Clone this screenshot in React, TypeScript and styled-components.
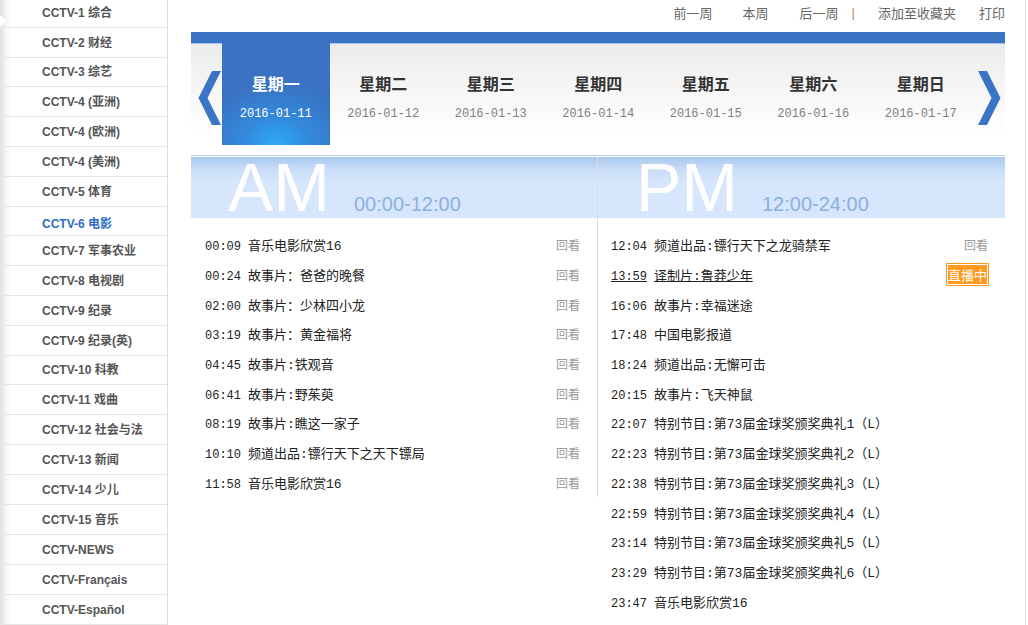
import React from 'react'
import styled, { createGlobalStyle } from 'styled-components'

const GlobalStyle = createGlobalStyle`
  html, body {
    margin: 0;
    padding: 0;
    height: 625px;
    overflow: hidden;
    background: #fff;
  }
  body {
    font-family: "Liberation Sans", "Noto Sans CJK SC", sans-serif;
    color: #333;
  }
`

const Page = styled.div`
  display: flex;
  align-items: flex-start;
  width: 1025px;
  height: 625px;
  border-right: 1px solid #e2e2e2;
`

const Sidebar = styled.ul`
  position: relative;
  list-style: none;
  margin: -2px 0 0 0;
  padding: 0;
  width: 167px;
  height: 627px;
  border-right: 1px solid #dcdcdc;
  background: linear-gradient(to right, #dedede 0, #f6f6f6 6px, #fff 12px);
  flex-shrink: 0;

  &::before {
    content: '';
    position: absolute;
    left: 0;
    top: 17px;
    border-left: 6px solid #fff;
    border-top: 6px solid transparent;
    border-bottom: 6px solid transparent;
  }
`

// some rows of the original list are one pixel shorter
const ChannelItem = styled.li<{ $active?: boolean; $tight?: boolean }>`
  height: ${({ $tight, $active }) => ($active ? 21 : $tight ? 27 : 28)}px;
  line-height: ${({ $tight, $active }) => ($active ? 21 : $tight ? 27 : 28)}px;
  padding-top: ${({ $active }) => ($active ? '7px' : '1px')};
  border-bottom: 1px solid #e6e6e6;
  padding-left: 42px;
  font-size: 12px;
  font-weight: bold;
  color: ${({ $active }) => ($active ? '#2d6dc4' : '#555')};
  white-space: nowrap;
`

const Main = styled.div`
  margin-left: 23px;
  width: 814px;
  flex-shrink: 0;
`

const TopLinks = styled.div`
  display: flex;
  justify-content: flex-end;
  align-items: center;
  height: 24px;
  margin-bottom: 8px;
  font-family: "Noto Sans CJK SC", sans-serif;
  font-size: 13px;
  color: #666;
`

const TopLink = styled.span<{ $gap: number }>`
  margin-left: ${({ $gap }) => $gap}px;
  cursor: pointer;
`

const Pipe = styled.span`
  margin-left: 13px;
  color: #b98a5c;
  font-family: "Liberation Sans", sans-serif;
`

const WeekBar = styled.div`
  border-top: 11px solid #3a73c3;
  border-bottom: 1px solid #b9cfee;
  margin-bottom: 1px;
`

const WeekBody = styled.div`
  display: flex;
  align-items: flex-start;
  height: 112px;
  background: linear-gradient(to bottom, #ebebeb 0%, #f6f6f6 40%, #fff 85%);
  box-shadow: inset 0 1px 0 #a9c2e6;
`

const ArrowBox = styled.div<{ $side: 'left' | 'right' }>`
  display: flex;
  align-items: center;
  justify-content: ${({ $side }) => ($side === 'left' ? 'flex-end' : 'flex-start')};
  padding-left: ${({ $side }) => ($side === 'left' ? '0' : '2px')};
  height: 110px;
  width: ${({ $side }) => ($side === 'left' ? 31 : 28.5)}px;
  flex-shrink: 0;
`

const DayTab = styled.div<{ $active?: boolean }>`
  width: 107.5px;
  height: 102px;
  flex-shrink: 0;
  display: flex;
  flex-direction: column;
  align-items: center;
  padding-top: 29px;
  box-sizing: border-box;
  background: ${({ $active }) =>
    $active
      ? 'radial-gradient(ellipse 70% 60% at 50% 100%, #2eaaf7 0%, #3389dc 45%, #3a73c3 100%)'
      : 'transparent'};
`

const DayName = styled.div<{ $active?: boolean }>`
  font-family: "Noto Sans CJK SC", sans-serif;
  font-size: 16px;
  font-weight: bold;
  line-height: 22px;
  color: ${({ $active }) => ($active ? '#fff' : '#333')};
`

const DayDate = styled.div<{ $active?: boolean }>`
  margin-top: 12px;
  font-family: "Liberation Mono", monospace;
  font-size: 12px;
  line-height: 16px;
  color: ${({ $active }) => ($active ? '#fff' : '#808080')};
`

const Schedule = styled.div`
  display: grid;
  grid-template-columns: 407px 407px;
  align-items: start;
`

const Column = styled.div<{ $divider?: boolean }>`
  border-right: ${({ $divider }) => ($divider ? '1px solid #dcdcdc' : 'none')};
`

const PeriodHeader = styled.div<{ $indent: number }>`
  display: flex;
  align-items: baseline;
  height: 61px;
  padding-left: ${({ $indent }) => $indent}px;
  background: linear-gradient(to bottom, #a8c8ef 0%, #c6dbf7 18%, #d6e6fc 40%, #d6e6fc 100%);
`

const PeriodLabel = styled.span`
  font-family: "Liberation Sans", sans-serif;
  font-size: 68px;
  line-height: 61px;
  color: #fff;
`

const PeriodRange = styled.span`
  margin-left: 24px;
  font-family: "Liberation Sans", sans-serif;
  font-size: 20px;
  line-height: 20px;
  color: #8db0de;
`

const ProgramList = styled.ul<{ $indent: number }>`
  list-style: none;
  margin: 0;
  padding: 12px 17px 0 ${({ $indent }) => $indent}px;
`

const ProgramRow = styled.li`
  display: flex;
  align-items: center;
  height: 29.7px;
`

const ProgramText = styled.span<{ $live?: boolean }>`
  flex: 1;
  white-space: nowrap;
  font-family: "Liberation Mono", "Noto Sans CJK SC", monospace;
  font-size: 13px;
  color: #222;
  text-decoration: ${({ $live }) => ($live ? 'underline' : 'none')};
`

const ProgramTime = styled.span`
  font-size: 12px;
  margin-right: 7px;
`

const Replay = styled.span`
  font-family: "Noto Sans CJK SC", sans-serif;
  font-size: 12px;
  color: #999;
`

const LiveBadge = styled.span`
  margin-right: -1px;
  padding: 0 2px;
  height: 23px;
  line-height: 23px;
  font-family: "Noto Sans CJK SC", sans-serif;
  font-size: 13px;
  color: #fff;
  background: #ff9a1f;
  box-shadow: inset 0 0 0 1px #ff9a1f, inset 0 0 0 2px #fff;
`

const channels = [
  'CCTV-1 综合', 'CCTV-2 财经', 'CCTV-3 综艺', 'CCTV-4 (亚洲)', 'CCTV-4 (欧洲)',
  'CCTV-4 (美洲)', 'CCTV-5 体育', 'CCTV-6 电影', 'CCTV-7 军事农业', 'CCTV-8 电视剧',
  'CCTV-9 纪录', 'CCTV-9 纪录(英)', 'CCTV-10 科教', 'CCTV-11 戏曲', 'CCTV-12 社会与法',
  'CCTV-13 新闻', 'CCTV-14 少儿', 'CCTV-15 音乐', 'CCTV-NEWS', 'CCTV-Français', 'CCTV-Español',
]

const days = [
  { name: '星期一', date: '2016-01-11' },
  { name: '星期二', date: '2016-01-12' },
  { name: '星期三', date: '2016-01-13' },
  { name: '星期四', date: '2016-01-14' },
  { name: '星期五', date: '2016-01-15' },
  { name: '星期六', date: '2016-01-16' },
  { name: '星期日', date: '2016-01-17' },
]

type Program = { time: string; title: string; status?: 'replay' | 'live' }

const amPrograms: Program[] = [
  { time: '00:09', title: '音乐电影欣赏16', status: 'replay' },
  { time: '00:24', title: '故事片：爸爸的晚餐', status: 'replay' },
  { time: '02:00', title: '故事片：少林四小龙', status: 'replay' },
  { time: '03:19', title: '故事片：黄金福将', status: 'replay' },
  { time: '04:45', title: '故事片:铁观音', status: 'replay' },
  { time: '06:41', title: '故事片:野茱萸', status: 'replay' },
  { time: '08:19', title: '故事片:瞧这一家子', status: 'replay' },
  { time: '10:10', title: '频道出品:镖行天下之天下镖局', status: 'replay' },
  { time: '11:58', title: '音乐电影欣赏16', status: 'replay' },
]

const pmPrograms: Program[] = [
  { time: '12:04', title: '频道出品:镖行天下之龙骑禁军', status: 'replay' },
  { time: '13:59', title: '译制片:鲁莽少年', status: 'live' },
  { time: '16:06', title: '故事片:幸福迷途' },
  { time: '17:48', title: '中国电影报道' },
  { time: '18:24', title: '频道出品:无懈可击' },
  { time: '20:15', title: '故事片:飞天神鼠' },
  { time: '22:07', title: '特别节目:第73届金球奖颁奖典礼1（L）' },
  { time: '22:23', title: '特别节目:第73届金球奖颁奖典礼2（L）' },
  { time: '22:38', title: '特别节目:第73届金球奖颁奖典礼3（L）' },
  { time: '22:59', title: '特别节目:第73届金球奖颁奖典礼4（L）' },
  { time: '23:14', title: '特别节目:第73届金球奖颁奖典礼5（L）' },
  { time: '23:29', title: '特别节目:第73届金球奖颁奖典礼6（L）' },
  { time: '23:47', title: '音乐电影欣赏16' },
]

const Chevron = ({ dir }: { dir: 'left' | 'right' }) => (
  <svg width="24" height="54" viewBox="0 0 24 54">
    <polygon
      points={dir === 'left'
        ? '14,0 23,0 9.5,27 23,54 14,54 0.5,27'
        : '10,0 1,0 14.5,27 1,54 10,54 23.5,27'}
      fill="#3b74c4"
    />
  </svg>
)

function Period({ label, range, indent, programs, divider }: {
  label: string; range: string; indent: number; programs: Program[]; divider?: boolean
}) {
  return (
    <Column $divider={divider}>
      <PeriodHeader $indent={indent}>
        <PeriodLabel>{label}</PeriodLabel>
        <PeriodRange>{range}</PeriodRange>
      </PeriodHeader>
      <ProgramList $indent={divider ? 14 : 13}>
        {programs.map((p) => (
          <ProgramRow key={p.time}>
            <ProgramText $live={p.status === 'live'}>
              <ProgramTime>{p.time}</ProgramTime>
              {p.title}
            </ProgramText>
            {p.status === 'replay' && <Replay>回看</Replay>}
            {p.status === 'live' && <LiveBadge>直播中</LiveBadge>}
          </ProgramRow>
        ))}
      </ProgramList>
    </Column>
  )
}

export default function App() {
  return (
    <Page>
      <GlobalStyle />
      <Sidebar>
        {channels.map((c, i) => (
          <ChannelItem
            key={c}
            $active={c === 'CCTV-6 电影'}
            $tight={i === 2 || i === 12}
          >
            {c}
          </ChannelItem>
        ))}
      </Sidebar>

      <Main>
        <TopLinks>
          <TopLink $gap={0}>前一周</TopLink>
          <TopLink $gap={30}>本周</TopLink>
          <TopLink $gap={31}>后一周</TopLink>
          <Pipe>|</Pipe>
          <TopLink $gap={23}>添加至收藏夹</TopLink>
          <TopLink $gap={23}>打印</TopLink>
        </TopLinks>

        <WeekBar>
          <WeekBody>
            <ArrowBox $side="left"><Chevron dir="left" /></ArrowBox>
            {days.map((d, i) => (
              <DayTab key={d.date} $active={i === 0}>
                <DayName $active={i === 0}>{d.name}</DayName>
                <DayDate $active={i === 0}>{d.date}</DayDate>
              </DayTab>
            ))}
            <ArrowBox $side="right"><Chevron dir="right" /></ArrowBox>
          </WeekBody>
        </WeekBar>

        <Schedule>
          <Period label="AM" range="00:00-12:00" indent={37} programs={amPrograms} divider />
          <Period label="PM" range="12:00-24:00" indent={38} programs={pmPrograms} />
        </Schedule>
      </Main>
    </Page>
  )
}
